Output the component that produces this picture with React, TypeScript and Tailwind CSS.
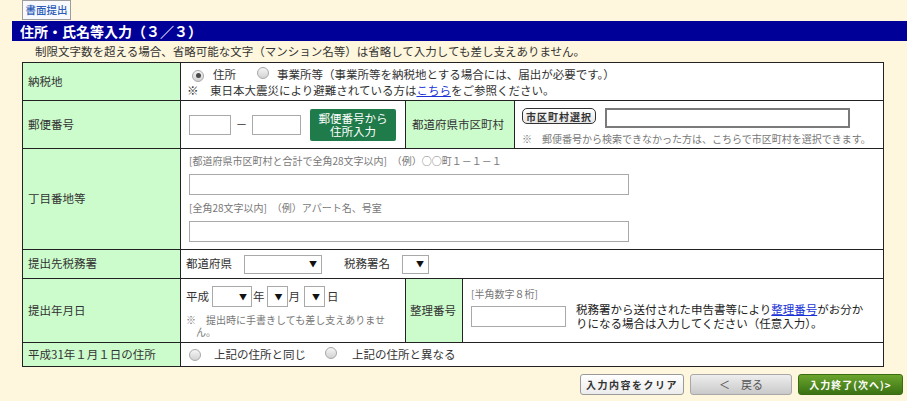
function Radio({ checked = false }: { checked?: boolean }) {
  return (
    <span className="inline-flex h-[12px] w-[12px] shrink-0 items-center justify-center rounded-full border border-[#a8a8a8] bg-linear-to-b from-[#f6f6f6] to-[#d2d2d2]">
      {checked && <span className="h-[5px] w-[5px] rounded-full bg-[#4a4a4a]" />}
    </span>
  );
}

function Select({ className }: { className: string }) {
  return (
    <div className={`flex shrink-0 items-center justify-end border border-[#a9a9a9] bg-white pr-[4px] text-[8px] leading-none text-[#111] ${className}`}>
      ▼
    </div>
  );
}

export default function App() {
  return (
    <div className="h-[401px] w-[907px] overflow-hidden bg-[#fef6dd] font-['Noto_Sans_CJK_JP',sans-serif] text-[11.5px] text-[#333]">
      {/* Top link */}
      <div className="pl-[22px]">
        <div className="flex h-[20px] w-[49px] items-center justify-center whitespace-nowrap border border-[#9c9c9c] bg-[#f7f9fd] text-[10.5px] font-medium text-[#2b5cb6]">
          書面提出
        </div>
      </div>

      {/* Title bar */}
      <div className="ml-[12px] mt-[1px] h-[20px] bg-[#000099] pl-[8px] text-[14px] font-bold leading-[20px] text-white">
        住所・氏名等入力（３／３）
      </div>
      <p className="h-[21px] pl-[35px] leading-[21px]">
        制限文字数を超える場合、省略可能な文字（マンション名等）は省略して入力しても差し支えありません。
      </p>

      {/* Form table */}
      <div className="ml-[22px] w-[862px] border border-[#222] bg-white">
        {/* 納税地 */}
        <div className="flex h-[38px] border-b border-[#222]">
          <div className="flex w-[158px] items-center border-r border-[#222] bg-[#ccfccc] pl-[5px]">納税地</div>
          <div className="flex flex-1 flex-col justify-center pl-[6px] leading-[16px]">
            <div className="flex items-center">
              <span className="ml-[5px]"><Radio checked /></span>
              <span className="ml-[9px]">住所</span>
              <span className="ml-[21px]"><Radio /></span>
              <span className="ml-[8px]">事業所等（事業所等を納税地とする場合には、届出が必要です。）</span>
            </div>
            <div>
              ※　東日本大震災により避難されている方は<span className="text-[#1a33d6] underline">こちら</span>をご参照ください。
            </div>
          </div>
        </div>

        {/* 郵便番号 */}
        <div className="flex h-[48px] border-b border-[#222]">
          <div className="flex w-[158px] items-center border-r border-[#222] bg-[#ccfccc] pl-[5px]">郵便番号</div>
          <div className="flex w-[224px] items-center pl-[8px]">
            <input readOnly className="h-[20px] w-[42px] border border-[#a9a9a9] bg-white" />
            <span className="w-[21px] text-center">－</span>
            <input readOnly className="h-[20px] w-[49px] border border-[#a9a9a9] bg-white" />
            <div className="ml-[9px] flex h-[32px] w-[86px] flex-col items-center justify-center rounded-[2px] bg-[#1f7b49] leading-[13px] text-white">
              <span>郵便番号から</span>
              <span>住所入力</span>
            </div>
          </div>
          <div className="flex w-[110px] items-center border-x border-[#222] bg-[#ccfccc] pl-[6px]">都道府県市区町村</div>
          <div className="flex-1 pl-[7px] pt-[7px]">
            <div className="flex items-start">
              <div className="flex h-[16px] w-[74px] items-center justify-center rounded-[5px] border border-[#333] bg-linear-to-b from-white to-[#e6e6e6] text-[10px] font-bold tracking-[1px] text-[#333]">
                市区町村選択
              </div>
              <input readOnly className="ml-[9px] h-[20px] w-[245px] border-2 border-[#7a7a7a] bg-white" />
            </div>
            <p className="mt-[5px] text-[10px] leading-[12px] text-[#777]">
              ※　郵便番号から検索できなかった方は、こちらで市区町村を選択できます。
            </p>
          </div>
        </div>

        {/* 丁目番地等 */}
        <div className="flex h-[101px] border-b border-[#222]">
          <div className="flex w-[158px] items-center border-r border-[#222] bg-[#ccfccc] pl-[5px]">丁目番地等</div>
          <div className="flex-1 pl-[8px] pt-[5px]">
            <p className="text-[10px] leading-[14px] text-[#777]">
              [都道府県市区町村と合計で全角28文字以内]　（例）○○町１－１－１
            </p>
            <input readOnly className="mt-[6px] block h-[21px] w-[440px] border border-[#a9a9a9] bg-white" />
            <p className="mt-[6px] text-[10px] leading-[14px] text-[#777]">[全角28文字以内]　（例）アパート名、号室</p>
            <input readOnly className="mt-[6px] block h-[21px] w-[440px] border border-[#a9a9a9] bg-white" />
          </div>
        </div>

        {/* 提出先税務署 */}
        <div className="flex h-[29px] border-b border-[#222]">
          <div className="flex w-[158px] items-center border-r border-[#222] bg-[#ccfccc] pl-[5px]">提出先税務署</div>
          <div className="flex flex-1 items-center pl-[5px]">
            <span>都道府県</span>
            <Select className="ml-[12px] h-[19px] w-[78px]" />
            <span className="ml-[22px]">税務署名</span>
            <Select className="ml-[12px] h-[19px] w-[27px]" />
          </div>
        </div>

        {/* 提出年月日 */}
        <div className="flex h-[64px] border-b border-[#222]">
          <div className="flex w-[158px] items-center border-r border-[#222] bg-[#ccfccc] pl-[5px]">提出年月日</div>
          <div className="w-[224px] pl-[5px] pt-[7px]">
            <div className="flex h-[21px] items-center">
              <span>平成</span>
              <Select className="ml-[3px] h-[21px] w-[40px]" />
              <span className="ml-[1px]">年</span>
              <Select className="ml-[2px] h-[21px] w-[21px]" />
              <span className="ml-[1px]">月</span>
              <Select className="ml-[4px] h-[21px] w-[21px]" />
              <span className="ml-[2px]">日</span>
            </div>
            <div className="mt-[7px] text-[10px] leading-[12px] text-[#777]">
              <p>※　提出時に手書きしても差し支えありませ</p>
              <p className="pl-[10px]">ん。</p>
            </div>
          </div>
          <div className="flex w-[58px] items-center border-x border-[#222] bg-[#ccfccc] pl-[4px]">整理番号</div>
          <div className="flex-1 pl-[8px] pt-[9px]">
            <p className="text-[10px] leading-[12px] text-[#777]">[半角数字８桁]</p>
            <div className="mt-[2px] flex items-center">
              <input readOnly className="h-[21px] w-[95px] border border-[#a9a9a9] bg-white" />
              <div className="ml-[10px] w-[292px] leading-[14px] text-[#222]">
                <p>
                  税務署から送付された申告書等により<span className="text-[#1a33d6] underline">整理番号</span>がお分か
                </p>
                <p>りになる場合は入力してください（任意入力）。</p>
              </div>
            </div>
          </div>
        </div>

        {/* 平成31年1月1日の住所 */}
        <div className="flex h-[23px]">
          <div className="flex w-[158px] items-center border-r border-[#222] bg-[#ccfccc] pl-[5px]">平成31年１月１日の住所</div>
          <div className="flex flex-1 items-center pl-[8px]">
            <Radio />
            <span className="ml-[13px]">上記の住所と同じ</span>
            <span className="ml-[19px]"><Radio /></span>
            <span className="ml-[15px]">上記の住所と異なる</span>
          </div>
        </div>
      </div>

      {/* Buttons */}
      <div className="mt-[7px] flex justify-end gap-[6px] pr-[4px]">
        <div className="flex h-[21px] w-[104px] items-center justify-center rounded-[3px] border border-[#9a9a9a] bg-linear-to-b from-white to-[#ececec] text-[10px] font-bold tracking-[1.5px] text-[#333]">
          入力内容をクリア
        </div>
        <div className="flex h-[21px] w-[102px] items-center justify-center rounded-[3px] border border-[#a8a8a8] bg-linear-to-b from-[#eeeeee] to-[#c9c9c9] text-[11px] text-[#555]">
          ＜　戻る
        </div>
        <div className="flex h-[21px] w-[105px] items-center justify-center rounded-[3px] border border-[#3c6c12] bg-linear-to-b from-[#6ba52d] to-[#3b7213] text-[10px] font-bold tracking-[1px] text-white">
          入力終了(次へ)&gt;
        </div>
      </div>
    </div>
  );
}
